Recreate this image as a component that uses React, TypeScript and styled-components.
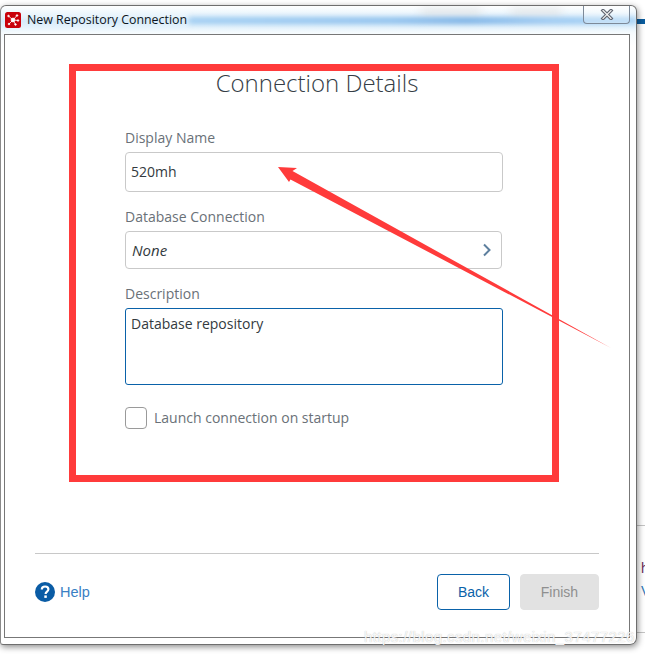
import React from "react";
import styled, { createGlobalStyle } from "styled-components";

const Global = createGlobalStyle`
  html, body { margin: 0; padding: 0; background: #fff; }
  body { font-family: "Open Sans", "Liberation Sans", sans-serif; }
`;

const Page = styled.div`
  position: relative;
  width: 645px;
  height: 656px;
  overflow: hidden;
  background: #fff;
  padding: 5px 8px 0 0;
  box-sizing: border-box;
`;

const Backdrop = styled.div`
  position: absolute;
  inset: 0;
  overflow: hidden;
`;

const BlueStrip = styled.div`
  position: absolute;
  right: 0;
  top: 19px;
  width: 10px;
  height: 5px;
  background: #0a5c9e;
`;

const LeftHaze = styled.div`
  position: absolute;
  left: -8px;
  top: 395px;
  width: 12px;
  height: 30px;
  border-radius: 6px;
  background: #bcdcf4;
  filter: blur(3px);
`;

const LeftHazeLow = styled(LeftHaze)`
  top: 550px;
  height: 50px;
  background: #d8ebf9;
`;

const BackLine = styled.div<{ $top: number }>`
  position: absolute;
  right: 0;
  top: ${(p) => p.$top}px;
  width: 8px;
  height: 1px;
  background: #c4c4c4;
`;

const BackText = styled.span<{ $top: number; $color: string }>`
  position: absolute;
  left: 641px;
  top: ${(p) => p.$top}px;
  font: 14px/16px "Liberation Sans", sans-serif;
  color: ${(p) => p.$color};
`;

const Window = styled.div`
  position: relative;
  width: 637px;
  height: 640px;
  box-sizing: border-box;
  border: 1px solid #6e6e6e;
  border-left-color: #8a8a8a;
  border-radius: 6px 6px 7px 3px;
  box-shadow: 1px 2px 6px rgba(0, 0, 0, 0.45);
  background: linear-gradient(
    180deg,
    #ffffff 0,
    #f0f8fd 6px,
    #e2f1fb 12px,
    #d6eafa 15px,
    #e2f1fb 20px,
    #f6fbfe 27px,
    #ffffff 40px
  );
  padding: 0 6px 6px 3px;
  display: flex;
  flex-direction: column;
  overflow: hidden;
`;

const ChromeBand = styled.div`
  position: absolute;
  left: 188px;
  right: 0;
  top: 11px;
  height: 7px;
  background: linear-gradient(90deg, #a4cff2 0, #93c3ee 45%, #7fb4e6 62%, #9dcaf2 80%, #a8d2f4 100%);
  filter: blur(2.5px);
`;

const ChromeSmudge = styled.div<{ $left: number; $width: number }>`
  position: absolute;
  left: ${(p) => p.$left}px;
  width: ${(p) => p.$width}px;
  top: 3px;
  height: 8px;
  background: #e2e5e7;
  filter: blur(5px);
`;

const TitleBar = styled.div`
  position: relative;
  height: 28px;
  flex: none;
  display: flex;
  align-items: flex-start;
  padding: 6px 0 0 1px;
  box-sizing: border-box;
`;

const AppIcon = styled.svg`
  width: 16px;
  height: 16px;
  flex: none;
`;

const TitleText = styled.span`
  margin-left: 6px;
  font: 12.4px/16px "Open Sans", sans-serif;
  color: #0c1420;
`;

const CloseButton = styled.div`
  position: absolute;
  top: -1px;
  right: 6px;
  width: 47px;
  height: 19px;
  box-sizing: border-box;
  border: 1px solid #7d8a99;
  border-top: none;
  border-radius: 0 0 4px 4px;
  display: flex;
  align-items: center;
  justify-content: center;
  background: rgba(255, 255, 255, 0.25);
`;

const Panel = styled.div`
  position: relative;
  flex: 1;
  background: #fff;
  border: 1px solid #777;
  display: flex;
  flex-direction: column;
  min-height: 0;
`;

const Heading = styled.h1`
  margin: 33px 0 0;
  font: 300 24px/30px "Open Sans", sans-serif;
  color: #353d46;
  text-align: center;
`;

const Form = styled.div`
  flex: 1;
  margin: 30px 0 0 120px;
  width: 378px;
  display: flex;
  flex-direction: column;
`;

const Label = styled.label`
  display: block;
  font: 14px/20px "Open Sans", sans-serif;
  color: #6a7178;
`;

const FieldGap = styled.div<{ $h: number }>`
  height: ${(p) => p.$h}px;
  flex: none;
`;

const TextField = styled.div`
  margin-top: 4px;
  height: 40px;
  box-sizing: border-box;
  border: 1px solid #c9c9c9;
  border-radius: 4px;
  padding: 0 5px;
  display: flex;
  align-items: center;
  font: 14px/20px "Open Sans", sans-serif;
  color: #333a40;
`;

const SelectField = styled(TextField)`
  width: 377px;
  height: 38px;
  justify-content: space-between;
  font-size: 15px;
  font-style: italic;
  padding: 0 9px 1px 6px;
`;

const Chevron = styled.svg`
  width: 10px;
  height: 14px;
`;

const TextArea = styled.div`
  margin-top: 4px;
  height: 77px;
  box-sizing: border-box;
  border: 1px solid #0a62a9;
  border-radius: 3px;
  padding: 5px;
  font: 14px/20px "Open Sans", sans-serif;
  color: #333a40;
`;

const CheckRow = styled.div`
  margin-top: 22px;
  display: flex;
  align-items: center;
  gap: 7px;
`;

const CheckBox = styled.div`
  width: 22px;
  height: 22px;
  box-sizing: border-box;
  border: 1px solid #9a9a9a;
  border-radius: 4px;
`;

const Separator = styled.div`
  flex: none;
  height: 1px;
  margin: 0 30px;
  background: #c8c8c8;
`;

const Footer = styled.div`
  flex: none;
  height: 83px;
  padding: 20px 30px 0;
  box-sizing: border-box;
  display: flex;
  justify-content: space-between;
  align-items: flex-start;
`;

const HelpLink = styled.div`
  display: flex;
  align-items: center;
  gap: 5px;
  height: 36px;
  font: 14.5px/20px "Liberation Sans", sans-serif;
  color: #3a7fc4;
`;

const HelpIcon = styled.svg`
  width: 20px;
  height: 20px;
`;

const Buttons = styled.div`
  display: flex;
  gap: 10px;
`;

const Button = styled.div<{ $primary?: boolean }>`
  width: ${(p) => (p.$primary ? 73 : 79)}px;
  height: 36px;
  box-sizing: border-box;
  border-radius: 4px;
  display: flex;
  align-items: center;
  justify-content: center;
  font: 14px/20px "Liberation Sans", sans-serif;
  color: ${(p) => (p.$primary ? "#0a62a9" : "#8f8f8f")};
  border: 1px solid ${(p) => (p.$primary ? "#0a62a9" : "#e2e2e2")};
  background: ${(p) => (p.$primary ? "#fff" : "#e2e2e2")};
`;

const Annotation = styled.svg`
  position: absolute;
  left: 0;
  top: 0;
  width: 645px;
  height: 656px;
  pointer-events: none;
`;

const Watermark = styled.span`
  position: absolute;
  left: 364px;
  top: 628px;
  font: 15px/18px "Liberation Sans", sans-serif;
  letter-spacing: 0.42px;
  color: rgba(255, 255, 255, 0.9);
  text-shadow: 0 0 1px rgba(130, 130, 130, 0.6);
  white-space: nowrap;
`;

export default function App() {
  return (
    <Page>
      <Global />
      <Backdrop>
        <BlueStrip />
        <LeftHaze />
        <LeftHazeLow />
        <BackLine $top={525} />
        <BackLine $top={632} />
        <BackText $top={560} $color="#6b2d5c">h</BackText>
        <BackText $top={583} $color="#2f78b7">V</BackText>
      </Backdrop>
      <Window>
        <ChromeSmudge $left={420} $width={60} />
        <ChromeSmudge $left={510} $width={50} />
        <ChromeBand />
        <TitleBar>
          <AppIcon viewBox="0 0 16 16">
            <rect x="0" y="0" width="16" height="16" rx="2.5" fill="#c9000a" />
            <g stroke="#fff" strokeWidth="0.8" fill="#fff">
              <path d="M8 8 L3.5 4 M8 8 L12 3.5 M8 8 L13 8.5 M8 8 L10.5 12.5 M8 8 L4 12" />
              <circle cx="8" cy="8" r="1.9" />
              <circle cx="3.5" cy="4" r="0.8" />
              <circle cx="12" cy="3.5" r="0.8" />
              <circle cx="13" cy="8.5" r="0.8" />
              <circle cx="10.5" cy="12.5" r="0.8" />
              <circle cx="4" cy="12" r="0.8" />
            </g>
          </AppIcon>
          <TitleText>New Repository Connection</TitleText>
        </TitleBar>
        <CloseButton>
          <svg width="14" height="11" viewBox="0 0 14 11">
            <path d="M3 1.5 L11 9.5 M11 1.5 L3 9.5" stroke="#5f6470" strokeWidth="3.4" strokeLinecap="square" />
            <path d="M3 1.5 L11 9.5 M11 1.5 L3 9.5" stroke="#f4f4f4" strokeWidth="1.2" strokeLinecap="square" />
          </svg>
        </CloseButton>
        <Panel>
          <Heading>Connection Details</Heading>
          <Form>
            <Label>Display Name</Label>
            <TextField>520mh</TextField>
            <FieldGap $h={15} />
            <Label>Database Connection</Label>
            <SelectField>
              None
              <Chevron viewBox="0 0 10 14">
                <path d="M2 1.5 L7.5 7 L2 12.5" fill="none" stroke="#5d7f9e" strokeWidth="2" />
              </Chevron>
            </SelectField>
            <FieldGap $h={15} />
            <Label>Description</Label>
            <TextArea>Database repository</TextArea>
            <CheckRow>
              <CheckBox />
              <Label as="span">Launch connection on startup</Label>
            </CheckRow>
          </Form>
          <Separator />
          <Footer>
            <HelpLink>
              <HelpIcon viewBox="0 0 20 20">
                <circle cx="10" cy="10" r="10" fill="#0a5ca5" />
                <path d="M6.8 7.6 C6.8 5.6 8.2 4.5 10.1 4.5 C12 4.5 13.4 5.6 13.4 7.3 C13.4 9.6 10.6 9.6 10.6 12" fill="none" stroke="#fff" strokeWidth="2.2" />
                <rect x="9.3" y="13.4" width="2.5" height="2.5" fill="#fff" />
              </HelpIcon>
              Help
            </HelpLink>
            <Buttons>
              <Button $primary>Back</Button>
              <Button>Finish</Button>
            </Buttons>
          </Footer>
        </Panel>
      </Window>
      <Annotation viewBox="0 0 645 656">
        <rect x="72.5" y="67.5" width="483" height="411" fill="none" stroke="#ff3b3b" strokeWidth="7" />
        <path d="M278 167 L297 168 L292.5 171 L611 348 L290.5 179.5 L289 182 Z" fill="#ff3b3b" />
      </Annotation>
      <Watermark>https://blog.csdn.net/weixin_37477226</Watermark>
    </Page>
  );
}
